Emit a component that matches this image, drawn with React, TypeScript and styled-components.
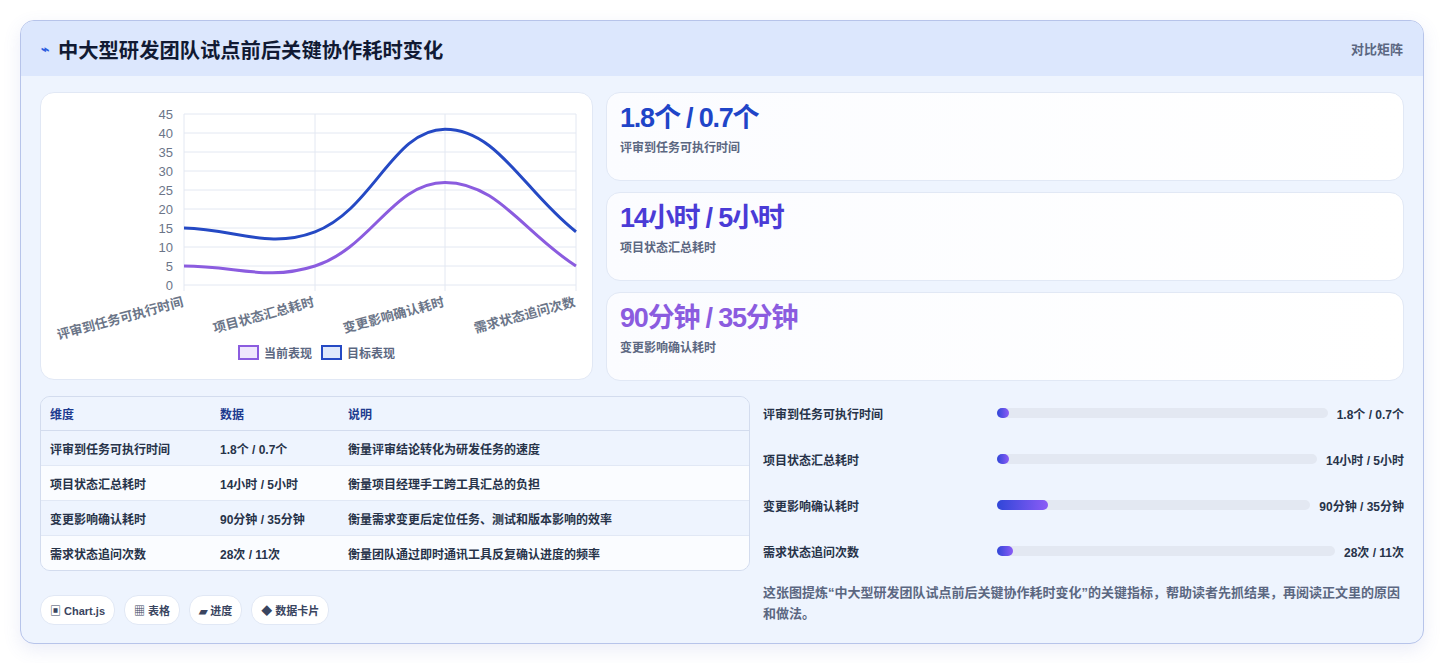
import React from "react";
import styled, { createGlobalStyle } from "styled-components";

const Global = createGlobalStyle`
  html, body { margin: 0; padding: 0; background: #fff; }
  body { font-family: "Liberation Sans", "Noto Sans CJK SC", sans-serif; }
`;

const Page = styled.div`
  padding: 20px 20px 21px 20px;
  width: 1444px; box-sizing: border-box;
`;
const Card = styled.div`
  border: 1px solid #b7c4ea; border-radius: 14px; overflow: hidden;
  background: #eef4fe; box-shadow: 0 6px 18px rgba(90,110,200,0.12);
`;
const Header = styled.div`
  height: 55px; background: #dce7fd; display: flex; align-items: center;
  justify-content: space-between; padding: 0 20px;
`;
const Title = styled.h1`
  margin: 0; font-size: 20.3px; font-weight: 700; color: #111a33; display: flex; align-items: center; gap: 9px;
`;
const TitleIcon = styled.span` color: #2f5fe0; font-size: 14px; `;
const HeadTag = styled.span` font-size: 13px; color: #5b6781; font-weight: 700; `;
const Body = styled.div` padding: 16px 19px 18px 19px; display: flex; flex-direction: column; gap: 15px; `;
const TopRow = styled.div` display: flex; gap: 13px; `;
const ChartCard = styled.div`
  width: 553px; height: 288px; background: #fff; border: 1px solid #e1e8f5; border-radius: 14px; box-sizing: border-box;
  position: relative;
`;
const Stats = styled.div` flex: 1; display: flex; flex-direction: column; gap: 11px; `;
const StatCard = styled.div`
  height: 89px; box-sizing: border-box; border: 1px solid #e1e8f5; border-radius: 14px;
  background: linear-gradient(90deg, #fbfcff, #ffffff); padding: 10px 13px;
`;
const StatValue = styled.div<{ $c: string }>`
  font-size: 27px; font-weight: 700; color: ${p => p.$c}; letter-spacing: -1.2px; line-height: 30px;
`;
const StatLabel = styled.div` font-size: 12px; color: #5b6781; font-weight: 700; margin-top: 5px; `;
const BottomRow = styled.div` display: flex; gap: 13px; `;
const Left = styled.div` width: 710px; display: flex; flex-direction: column; gap: 24px; `;
const Table = styled.table`
  width: 100%; border-collapse: separate; border-spacing: 0; border: 1px solid #d3dcee; border-radius: 10px; overflow: hidden;
  font-size: 12px; font-weight: 700;
  th { text-align: left; color: #1d3b8f; background: #eef4fe; height: 33px; padding: 0 9px; border-bottom: 1px solid #d3dcee; }
  td { color: #273349; height: 34px; padding: 0 9px; border-bottom: 1px solid #e1e8f5; }
  tr:nth-child(odd) td { background: #eef4fe; }
  tr:nth-child(even) td { background: #fafcff; }
  tr:last-child td { border-bottom: none; }
`;
const Chips = styled.div` display: flex; gap: 9px; `;
const Chip = styled.span`
  height: 28px; padding: 0 9px; border-radius: 14px; background: #fff; border: 1px solid #e1e8f5;
  display: inline-flex; align-items: center; font-size: 11px; font-weight: 700; color: #3a4560;
`;
const Right = styled.div` flex: 1; display: flex; flex-direction: column; `;
const Bars = styled.div` display: flex; flex-direction: column; gap: 26px; padding-top: 7px; `;
const BarRow = styled.div` display: flex; align-items: center; height: 20px; font-size: 12px; font-weight: 700; color: #273349; `;
const BarLabel = styled.span` width: 234px; flex-shrink: 0; `;
const Track = styled.div` flex: 1; height: 10px; border-radius: 5px; background: #e3e8f2; margin-right: 9px; `;
const Fill = styled.div` height: 10px; border-radius: 5px; background: linear-gradient(90deg, #3046d8, #8b5cf6); `;
const Note = styled.p` margin: 21px 0 0; font-size: 13px; line-height: 21px; color: #5b6781; font-weight: 700; `;
const Legend = styled.div`
  position: absolute; left: 0; right: 0; top: 251px; display: flex; justify-content: center; gap: 9px;
  font-size: 12px; font-weight: 700; color: #5b6781;
`;
const LegItem = styled.span` display: flex; align-items: center; gap: 5px; `;
const LegBox = styled.span<{ $b: string; $f: string }>`
  width: 17px; height: 11px; border: 2.5px solid ${p => p.$b}; background: ${p => p.$f};
`;

const xs = [143, 274, 404, 535];
const y0 = 192, k = 3.8;
function path(vals: number[]) {
  const pts = vals.map((v, i) => [xs[i], y0 - v * k]);
  const t = 0.4;
  const cps = pts.map((p, i) => {
    const pr = pts[i - 1] || p, nx = pts[i + 1] || p;
    const d01 = Math.hypot(p[0] - pr[0], p[1] - pr[1]);
    const d12 = Math.hypot(nx[0] - p[0], nx[1] - p[1]);
    const s = d01 + d12 || 1;
    const fa = (t * d01) / s, fb = (t * d12) / s;
    return { a: [p[0] - fa * (nx[0] - pr[0]), p[1] - fa * (nx[1] - pr[1])], b: [p[0] + fb * (nx[0] - pr[0]), p[1] + fb * (nx[1] - pr[1])] };
  });
  let d = `M${pts[0][0]},${pts[0][1]}`;
  for (let i = 1; i < pts.length; i++) {
    d += ` C${cps[i - 1].b[0]},${cps[i - 1].b[1]} ${cps[i].a[0]},${cps[i].a[1]} ${pts[i][0]},${pts[i][1]}`;
  }
  return d;
}

const cats = ["评审到任务可执行时间", "项目状态汇总耗时", "变更影响确认耗时", "需求状态追问次数"];

function Chart() {
  const ticks = [0, 5, 10, 15, 20, 25, 30, 35, 40, 45];
  return (
    <svg width="553" height="250" style={{ position: "absolute", left: 0, top: 0 }}>
      {ticks.map(tk => (
        <g key={tk}>
          <line x1={xs[0]} x2={xs[3]} y1={y0 - tk * k} y2={y0 - tk * k} stroke="#e3e8f2" />
          <text x={xs[0] - 11} y={y0 - tk * k + 5} textAnchor="end" fontSize="13" fill="#6b7588" fontFamily="Liberation Sans">{tk}</text>
        </g>
      ))}
      {xs.map(x => <line key={x} x1={x} x2={x} y1={y0 - 45 * k} y2={y0 + 6} stroke="#e3e8f2" />)}
      <path d={path([5, 5, 27, 5])} fill="none" stroke="#8b5cdf" strokeWidth="3" />
      <path d={path([15, 14, 41, 14])} fill="none" stroke="#2549c4" strokeWidth="3" />
      {cats.map((c, i) => (
        <text key={c} transform={`translate(${xs[i]},${y0 + 21}) rotate(-15)`} textAnchor="end" fontSize="13" fontWeight="700" fill="#6b7588" fontFamily="Liberation Sans, Noto Sans CJK SC">{c}</text>
      ))}
    </svg>
  );
}

const rows = [
  ["评审到任务可执行时间", "1.8个 / 0.7个", "衡量评审结论转化为研发任务的速度"],
  ["项目状态汇总耗时", "14小时 / 5小时", "衡量项目经理手工跨工具汇总的负担"],
  ["变更影响确认耗时", "90分钟 / 35分钟", "衡量需求变更后定位任务、测试和版本影响的效率"],
  ["需求状态追问次数", "28次 / 11次", "衡量团队通过即时通讯工具反复确认进度的频率"],
];
const fills = [12, 12, 51, 16];

export default function App() {
  return (
    <Page>
      <Global />
      <Card>
        <Header>
          <Title><TitleIcon>⌁</TitleIcon>中大型研发团队试点前后关键协作耗时变化</Title>
          <HeadTag>对比矩阵</HeadTag>
        </Header>
        <Body>
          <TopRow>
            <ChartCard>
              <Chart />
              <Legend>
                <LegItem><LegBox $b="#8b5cdf" $f="#efe7fd" />当前表现</LegItem>
                <LegItem><LegBox $b="#2549c4" $f="#dfe8fb" />目标表现</LegItem>
              </Legend>
            </ChartCard>
            <Stats>
              <StatCard><StatValue $c="#1f45c8">1.8个 / 0.7个</StatValue><StatLabel>评审到任务可执行时间</StatLabel></StatCard>
              <StatCard><StatValue $c="#4a3bd6">14小时 / 5小时</StatValue><StatLabel>项目状态汇总耗时</StatLabel></StatCard>
              <StatCard><StatValue $c="#8b5cdf">90分钟 / 35分钟</StatValue><StatLabel>变更影响确认耗时</StatLabel></StatCard>
            </Stats>
          </TopRow>
          <BottomRow>
            <Left>
              <Table>
                <thead><tr><th style={{ width: 152 }}>维度</th><th style={{ width: 110 }}>数据</th><th>说明</th></tr></thead>
                <tbody>{rows.map(r => <tr key={r[0]}>{r.map(c => <td key={c}>{c}</td>)}</tr>)}</tbody>
              </Table>
              <Chips>
                <Chip>▣ Chart.js</Chip><Chip>▦ 表格</Chip><Chip>▰ 进度</Chip><Chip>◆ 数据卡片</Chip>
              </Chips>
            </Left>
            <Right>
              <Bars>
                {rows.map((r, i) => (
                  <BarRow key={r[0]}>
                    <BarLabel>{r[0]}</BarLabel>
                    <Track><Fill style={{ width: fills[i] }} /></Track>
                    <span>{r[1]}</span>
                  </BarRow>
                ))}
              </Bars>
              <Note>这张图提炼“中大型研发团队试点前后关键协作耗时变化”的关键指标，帮助读者先抓结果，再阅读正文里的原因和做法。</Note>
            </Right>
          </BottomRow>
        </Body>
      </Card>
    </Page>
  );
}
